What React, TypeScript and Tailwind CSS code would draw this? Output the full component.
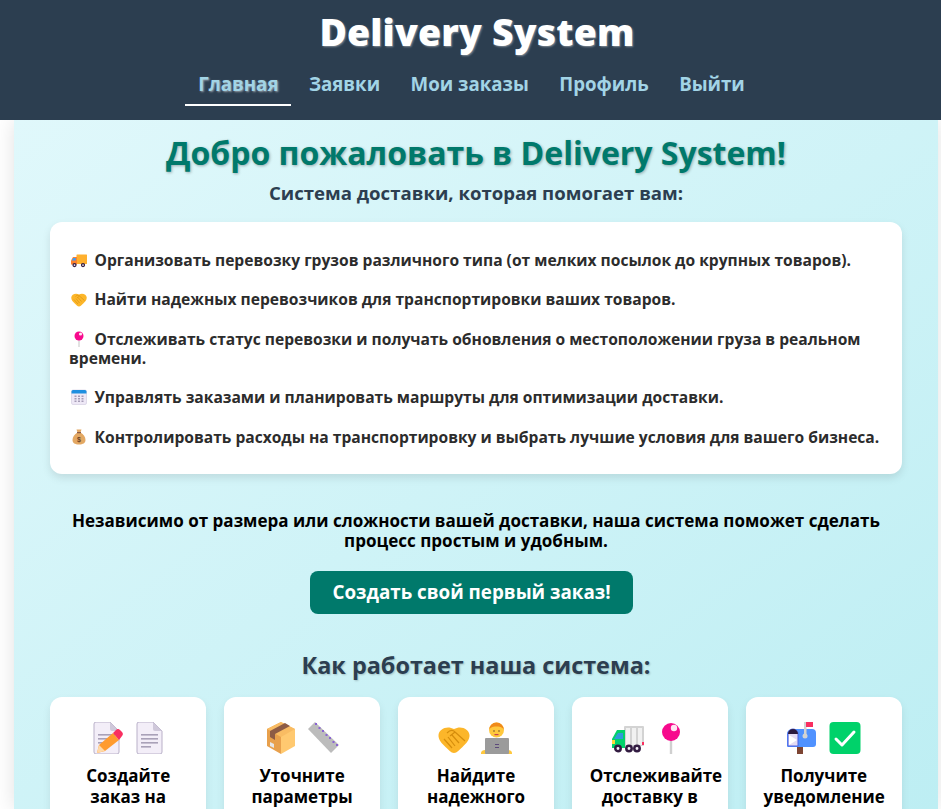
import React from "react";

type P = { className?: string };
const Svg = ({ className, children }: P & { children: React.ReactNode }) => (
  <svg viewBox="0 0 32 32" className={className}>{children}</svg>
);

const DocBase = () => (
  <>
    <path d="M3 2a2 2 0 0 1 2-2h14l9 9v21a2 2 0 0 1-2 2H5a2 2 0 0 1-2-2z" fill="#f3eef8" stroke="#b9b0c8" strokeWidth="1" />
    <path d="M19 0v7a2 2 0 0 0 2 2h7z" fill="#cfc8da" />
  </>
);
const Doc = ({ className }: P) => (
  <Svg className={className}>
    <DocBase />
    <g fill="#a9a1b8">
      <rect x="7" y="12" width="17" height="1.6" />
      <rect x="7" y="16" width="17" height="1.6" />
      <rect x="7" y="20" width="17" height="1.6" />
      <rect x="7" y="24" width="10" height="1.6" />
    </g>
  </Svg>
);
const Memo = ({ className }: P) => (
  <Svg className={className}>
    <DocBase />
    <g fill="#a9a1b8">
      <rect x="7" y="12" width="17" height="1.6" />
      <rect x="7" y="16" width="15" height="1.6" />
      <rect x="7" y="20" width="10" height="1.6" />
    </g>
    <path d="M6 31l2-8 14-12 6 7-14 11z" fill="#ff9b2e" />
    <path d="M6 31l2-8 6 6z" fill="#ffd9a8" />
    <path d="M22 11l3-3a3 3 0 0 1 4 0l2 2a3 3 0 0 1 0 4l-3 4z" fill="#f92f60" />
  </Svg>
);
const Box = ({ className }: P) => (
  <Svg className={className}>
    <path d="M16 0l14 7v17l-14 8z" fill="#ffc970" />
    <path d="M16 0L2 7v17l14 8z" fill="#e8a04c" />
    <path d="M16 0l14 7-14 8L2 7z" fill="#f9bc63" />
    <path d="M5 9l15-8 5 3-15 8v6l-5-3z" fill="#8d5b45" />
    <path d="M5 24l4 2v-4l-4-2z" fill="#e6e6e6" />
  </Svg>
);
const Ruler = ({ className }: P) => (
  <Svg className={className}>
    <path d="M0 7l7-7 24 23-8 8z" fill="#bcbcbc" />
    <g fill="#8a63d2">
      <rect x="7" y="1" width="2" height="2" />
      <rect x="10.500" y="5" width="2" height="2" />
      <rect x="14" y="8" width="2" height="2" />
      <rect x="17.500" y="12" width="2" height="2" />
      <rect x="21" y="15" width="2" height="2" />
      <rect x="24.500" y="19" width="2" height="2" />
      <rect x="28" y="22" width="2" height="2" />
    </g>
  </Svg>
);
const Handshake = ({ className }: P) => (
  <Svg className={className}>
    <path d="M0.500 13C1 7 9 3 16 7c7-4 15 0 15.500 6 .4 5-4 9-7 12-3 2.500-5.500 6-8.500 6s-5.500-3.500-8.500-6C4.500 22 .1 18 .5 13z" fill="#fcb62a" />
    <path d="M9 11c3-3 6-3 8-1l10 9M6 17l8 9M10 15l7 9M14 13l7 8M17 10l-5 4" fill="none" stroke="#d58d0c" strokeWidth="1.200" />
  </Svg>
);
const Person = ({ className }: P) => (
  <Svg className={className}>
    <circle cx="15.500" cy="8" r="7.500" fill="#ffc83d" />
    <path d="M8 8a7.500 7.500 0 0 1 15 0c-1-2-3-3.500-7.500-3.500S9 6 8 8z" fill="#f08a1a" />
    <circle cx="13" cy="9" r=".8" fill="#6b4a2c" />
    <circle cx="18" cy="9" r=".8" fill="#6b4a2c" />
    <rect x="13.500" y="12" width="4" height="1.200" fill="#c9424f" />
    <path d="M0 31c0-2 2-3 4-3h23c2 0 4 1 4 3v1H0z" fill="#ffc83d" />
    <rect x="4" y="16" width="24" height="16" rx="1" fill="#9b9b9b" />
    <rect x="14" y="22" width="4" height="1" fill="#5c4a7a" />
    <rect x="14" y="25" width="4" height="1" fill="#5c4a7a" />
  </Svg>
);
const Lorry = ({ className }: P) => (
  <Svg className={className}>
    <rect x="12" y="4" width="20" height="20" rx="1" fill="#d3d3d3" />
    <g fill="#f1f1f1">
      <rect x="14" y="6" width="4" height="17" />
      <rect x="20" y="6" width="4" height="17" />
      <rect x="26" y="6" width="4" height="17" />
    </g>
    <path d="M0 24v-7l5-9h8v18H0z" fill="#00d26a" />
    <path d="M2 17l4-6h5v6z" fill="#2e9bd8" />
    <rect x="0" y="18" width="3" height="4" fill="#ffd93b" />
    <rect x="30" y="20" width="2" height="3" fill="#f92f60" />
    <g fill="#f4f0f8" stroke="#321b41" strokeWidth="2.500">
      <circle cx="6" cy="26.500" r="2.700" />
      <circle cx="17" cy="26.500" r="2.700" />
      <circle cx="25" cy="26.500" r="2.700" />
    </g>
  </Svg>
);
const Pin = ({ className }: P) => (
  <Svg className={className}>
    <rect x="14.800" y="16" width="2.400" height="16" fill="#d0d0d0" />
    <circle cx="16" cy="10" r="9" fill="#f70a8d" />
    <circle cx="19" cy="6" r="3.200" fill="#ffe6f3" />
  </Svg>
);
const Mailbox = ({ className }: P) => (
  <Svg className={className}>
    <rect x="11" y="24" width="6" height="8" fill="#7d4533" />
    <path d="M6 7h20a4 4 0 0 1 4 4v11a3 3 0 0 1-3 3H2a1 1 0 0 1-1-1V12a5 5 0 0 1 5-5z" fill="#5092ff" />
    <path d="M2 24V12a5 5 0 0 1 10 0v12z" fill="#e4dcf3" stroke="#4f5fe0" strokeWidth="1" />
    <path d="M2 12a5 5 0 0 1 10 0z" fill="#2a1a3e" />
    <path d="M3 13l8 5-8 5z" fill="#fff" />
    <rect x="18" y="0" width="2.500" height="14" fill="#d3d3d3" />
    <circle cx="19" cy="14" r="2.500" fill="#d3d3d3" />
    <rect x="20" y="0" width="7" height="5" fill="#f92f60" />
  </Svg>
);
const Check = ({ className }: P) => (
  <Svg className={className}>
    <rect x="0.500" y="0" width="31" height="32" rx="4" fill="#00d26a" />
    <path d="M7 17l6 6L25 10" fill="none" stroke="#fff" strokeWidth="3" strokeLinecap="round" strokeLinejoin="round" />
  </Svg>
);
const TruckSmall = ({ className }: P) => (
  <Svg className={className}>
    <rect x="11" y="5" width="21" height="19" rx="1" fill="#ffb02e" />
    <path d="M0 25v-8l4-7h8v15z" fill="#ff822d" />
    <path d="M1.500 17l3-5h5v5z" fill="#3f9bf5" />
    <g fill="#f4f0f8" stroke="#321b41" strokeWidth="2.500">
      <circle cx="7" cy="26" r="3" />
      <circle cx="24" cy="26" r="3" />
    </g>
  </Svg>
);
const Calendar = ({ className }: P) => (
  <Svg className={className}>
    <rect x="1" y="2" width="30" height="29" rx="3" fill="#eee8f6" stroke="#c9c0d8" strokeWidth="1" />
    <path d="M1 9V5a3 3 0 0 1 3-3h24a3 3 0 0 1 3 3v4z" fill="#1f8fe0" />
    <g fill="#a59cb6">
      <rect x="7" y="13" width="4" height="3" />
      <rect x="14" y="13" width="4" height="3" />
      <rect x="21" y="13" width="4" height="3" />
      <rect x="7" y="18" width="4" height="3" />
      <rect x="14" y="18" width="4" height="3" />
      <rect x="21" y="18" width="4" height="3" />
      <rect x="7" y="23" width="4" height="3" />
      <rect x="14" y="23" width="4" height="3" />
      <rect x="21" y="23" width="4" height="3" />
    </g>
  </Svg>
);
const Money = ({ className }: P) => (
  <Svg className={className}>
    <path d="M11 1h10l-2 6c6 3 10 9 10 15 0 6-5 9-13 9S3 28 3 22C3 16 7 10 13 7z" fill="#e3a863" />
    <rect x="12" y="6" width="8" height="2.500" fill="#8d5b45" />
    <text x="16" y="25" textAnchor="middle" fontSize="14" fontWeight="700" fill="#6b4426" fontFamily="Liberation Sans, sans-serif">$</text>
  </Svg>
);

const small = "inline-block w-4 h-4 ml-[2px] mr-[7.5px] align-[-2px]";

const items: [React.ReactNode, string][] = [
  [<TruckSmall className={small} />, "Организовать перевозку грузов различного типа (от мелких посылок до крупных товаров)."],
  [<Handshake className={small} />, "Найти надежных перевозчиков для транспортировки ваших товаров."],
  [<Pin className={small} />, "Отслеживать статус перевозки и получать обновления о местоположении груза в реальном времени."],
  [<Calendar className={small} />, "Управлять заказами и планировать маршруты для оптимизации доставки."],
  [<Money className={small} />, "Контролировать расходы на транспортировку и выбрать лучшие условия для вашего бизнеса."],
];

const steps: [React.ReactNode, React.ReactNode, string][] = [
  [<Memo className="w-8 h-8" />, <Doc className="w-8 h-8" />, "Создайте заказ на"],
  [<Box className="w-8 h-8" />, <Ruler className="w-8 h-8" />, "Уточните параметры"],
  [<Handshake className="w-8 h-8" />, <Person className="w-8 h-8" />, "Найдите надежного"],
  [<Lorry className="w-8 h-8" />, <Pin className="w-8 h-8" />, "Отслеживайте доставку в"],
  [<Mailbox className="w-8 h-8" />, <Check className="w-8 h-8" />, "Получите уведомление"],
];

const links = ["Заявки", "Мои заказы", "Профиль", "Выйти"];

export default function App() {
  return (
    <div className="h-[809px] overflow-hidden bg-white font-['Open_Sans',sans-serif] font-bold">
      <header className="relative z-10 h-[120px] bg-[#2c3e50] text-center pt-[10px]">
        <h1 className="pl-[13px] text-[37.4px] leading-[44px] font-extrabold tracking-[0.2px] text-white [text-shadow:1px_1px_2px_rgba(255,255,255,0.4)]">Delivery System</h1>
        <nav className="mt-[11px] pl-[2px] flex justify-center gap-[4.4px] text-[18.7px] leading-[24px] text-[#a2d4e6]">
          <a className="px-[13px] pt-[7px] pb-[8px] border-b-2 border-white [text-shadow:1px_1px_2px_rgba(255,255,255,0.5)]">Главная</a>
          {links.map((l) => (
            <a key={l} className="px-[13px] pt-[7px] pb-[8px]">{l}</a>
          ))}
        </nav>
      </header>
      <main className="ml-[14px] w-[924px] h-[689px] overflow-hidden px-[36px] pt-[13px] bg-gradient-to-br from-[#e0f8fb] to-[#bdeef3] shadow-[0_0_20px_rgba(0,0,0,0.12)] text-center">
        <h2 className="text-[32px] leading-[40px] text-[#00796b] [text-shadow:1px_1px_3px_rgba(0,0,0,0.3)]">Добро пожаловать в Delivery System!</h2>
        <p className="mt-[9px] text-[18.6px] leading-[22px] text-[#2c3e50]">Система доставки, которая помогает вам:</p>
        <div className="mt-[18px] h-[252px] rounded-xl bg-white px-[19px] pt-[29px] text-left text-[15.6px] leading-[19px] text-[#2c2c2c] shadow-[0_4px_8px_rgba(0,0,0,0.1)]">
          {items.map(([icon, text], i) => (
            <p key={i} className="mb-[20.4px]">{icon}{text}</p>
          ))}
        </div>
        <p className="mt-[37px] px-[10px] text-[17.05px] leading-[20px] text-black">Независимо от размера или сложности вашей доставки, наша система поможет сделать процесс простым и удобным.</p>
        <button className="mt-[20px] mr-[9px] h-[43px] w-[323px] rounded-lg bg-[#00796b] text-[18.800px] text-white">Создать свой первый заказ!</button>
        <h3 className="mt-[36px] text-[23.4px] leading-[30px] text-[#2c3e50] [text-shadow:1px_1px_2px_rgba(0,0,0,0.2)]">Как работает наша система:</h3>
        <div className="mt-[17px] grid grid-cols-5 gap-[17.5px]">
          {steps.map(([a, b, t], i) => (
            <div key={i} className="rounded-xl bg-white px-[18px] pt-[25px] pb-[20px] shadow-[0_4px_8px_rgba(0,0,0,0.08)]">
              <div className="flex justify-center gap-[11px]">{a}{b}</div>
              <p className="mt-[11px] text-[17px] leading-[21px] text-black">{t}</p>
            </div>
          ))}
        </div>
      </main>
    </div>
  );
}
